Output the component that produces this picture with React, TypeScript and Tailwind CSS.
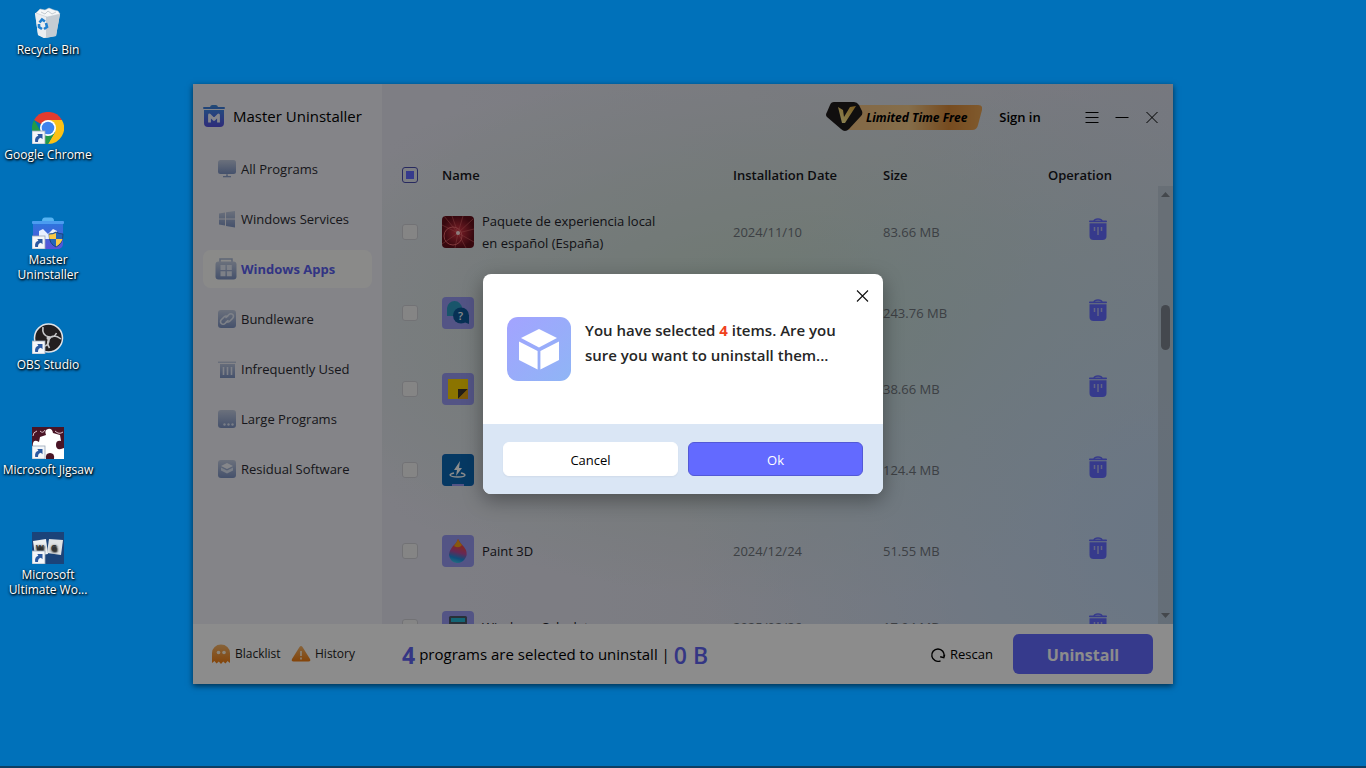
import React from 'react';

const Shortcut = () => (
    <g>
        <rect x="0" y="19" width="13" height="13" fill="#f4f6f9" stroke="#9aa7b8" strokeWidth="0.8" />
        <path d="M3.2 30c-.6-3.400 .6-5.800 3.200-6.300L5.300 22h5.200v5.300l-1.600-1.500c-2 .4-2.800 1.700-2.900 4.200z" fill="#2b58a0" />
    </g>
);

const RecycleBinIcon = () => (
    <svg viewBox="0 0 32 32" className="size-8">
        <path d="M3 6l14-2 11 3-4 22-12 2-6-3z" fill="#d5dbe0" />
        <path d="M3 6l11 3v21.500l-2 .5-6-3z" fill="#e9edf0" />
        <path d="M14 9l14-2-4 22-10 2z" fill="#c4ccd3" />
        <path d="M4 6l4-4 5 1 4-2 5 2 4 1 2 3-13 3z" fill="#f5f7f8" stroke="#bcc5cc" strokeWidth="0.5" />
        <path d="M9 5l4 2 3-3 4 3 4-2" stroke="#aeb8c0" strokeWidth="0.7" fill="none" />
        <path d="M7.500 15.500l2.500-3 3 2M14 16l1 4-3 2M10 22l-3-2v-3" stroke="#1f7fd0" strokeWidth="2.600" fill="none" />
    </svg>
);

const ChromeIcon = () => (
    <svg viewBox="0 0 32 32" className="size-8">
        <path d="M16 16L2.100 8A16 16 0 0 1 29.900 8z" fill="#e33b2e" />
        <path d="M16 8h13.900A16 16 0 0 1 16 32l7-12z" fill="#fbc116" />
        <path d="M2.100 8L9 20l7 4-1.500 8A16 16 0 0 1 2.100 8z" fill="#229a48" />
        <path d="M9 20l7 4 7-4-7 12A16 16 0 0 1 8 30z" fill="#229a48" />
        <circle cx="16" cy="16" r="8" fill="#fff" />
        <circle cx="16" cy="16" r="6.300" fill="#3f83ee" />
        <Shortcut />
    </svg>
);

const UninstallerIcon = () => (
    <svg viewBox="0 0 32 32" className="size-8">
        <defs>
            <linearGradient id="deskBin" x1="0" y1="0" x2="0" y2="1">
                <stop offset="0" stopColor="#2f74dd" />
                <stop offset="1" stopColor="#5a52d8" />
            </linearGradient>
        </defs>
        <path d="M10 4q0-3.500 3-3.500h6q3 0 3 3.500z" fill="#56b3f2" />
        <rect x="0" y="4" width="32" height="3" rx="1" fill="#4b9cf0" />
        <path d="M1 7h30v19q0 6-6 6H7q-6 0-6-6z" fill="url(#deskBin)" />
        <path d="M7 22v-8l4-2 5 5 5-5 4 2v8z" fill="#e8f0ff" />
        <path d="M24 15q3 2 7 2 0 10-7 13-7-3-7-13 4 0 7-2z" fill="#2464b8" stroke="#173c6e" strokeWidth="0.8" />
        <path d="M24 16v6h-6.500q-.5-2-.4-4.400 4 0 6.900-1.600zM24 22h6.500q-1.500 5-6.500 7.400z" fill="#fbc945" />
        <Shortcut />
    </svg>
);

const ObsIcon = () => (
    <svg viewBox="0 0 32 32" className="size-8">
        <circle cx="16.500" cy="16" r="14" fill="#231f20" stroke="#dfe3e8" strokeWidth="1.500" />
        <path d="M11 5c-1 6 1 9 6 10 3 .6 6-1 7.500-4M29 17c-5-4-9-4-12 0-2 3-1.500 6 .5 9M8 24c6 1 9-1 9-7" stroke="#c8c8ca" strokeWidth="1.600" fill="none" />
        <circle cx="16.500" cy="16" r="2" fill="#c8c8ca" />
        <Shortcut />
    </svg>
);

const JigsawIcon = () => (
    <svg viewBox="0 0 32 32" className="size-8">
        <rect width="32" height="32" fill="#4a1526" />
        <path d="M8 10l6-2q-2-5 2-6t5 4l7 2 1 6q-5-1-5 4t5 4l3-1v11H22q1-6-4-6t-4 6H3V21q-3-1-2-5t6-1z" fill="#fff" />
        <path d="M1 9q0-4 4-5M23 4q4 4 8 1M8 4q3 3 5-1" stroke="#d9c0c8" strokeWidth="1" fill="none" />
        <Shortcut />
    </svg>
);

const WordIcon = () => (
    <svg viewBox="0 0 32 32" className="size-8">
        <rect width="32" height="32" fill="#1b4379" />
        <path d="M1 9l13-2 2 15-13 2z" fill="#eef0f1" />
        <path d="M17 7l14 1-2 15-14-2z" fill="#dfe2e4" />
        <text x="4" y="19" fontSize="8" fontWeight="700" fill="#333" fontFamily="Open Sans, sans-serif">W</text>
        <text x="19" y="19" fontSize="8" fontWeight="700" fill="#333" fontFamily="Open Sans, sans-serif">G</text>
        <Shortcut />
    </svg>
);

const shortcuts = [
    { label: 'Recycle Bin', icon: <RecycleBinIcon /> },
    { label: 'Google Chrome', icon: <ChromeIcon /> },
    { label: 'Master Uninstaller', icon: <UninstallerIcon /> },
    { label: 'OBS Studio', icon: <ObsIcon /> },
    { label: 'Microsoft Jigsaw', icon: <JigsawIcon /> },
    { label: 'Microsoft Ultimate Wo...', icon: <WordIcon /> },
];

// shared gradient for the grey-blue sidebar glyphs
const NavGlyph = ({ children }: { children: React.ReactNode }) => (
    <svg viewBox="0 0 20 20" className="size-5 shrink-0" fill="url(#navFill)">
        {children}
    </svg>
);

const navItems = [
    {
        label: 'All Programs',
        icon: <NavGlyph><rect x="1" y="1" width="18" height="14" rx="2.500" /><path d="M9 15h2v2h3v1.200H6V17h3z" /></NavGlyph>,
    },
    {
        label: 'Windows Services',
        icon: <NavGlyph><path d="M2 4.500L8 3.500V9.500H2zM9 3.300L18 2V9.500H9zM2 10.500H8V16.500L2 15.500zM9 10.500H18V18.500L9 17z" /></NavGlyph>,
    },
    {
        label: 'Windows Apps',
        active: true,
        icon: (
            <svg viewBox="0 0 22 22" className="size-[22px] shrink-0">
                <path d="M5 4.500V1h12v3.500" fill="none" stroke="#a9b6d6" strokeWidth="1.500" />
                <rect x="0.500" y="3.500" width="21" height="18" rx="3" fill="url(#navFill)" />
                <path d="M5.500 7h5v5h-5zM11.800 7h5v5h-5zM5.500 13.300h5v5h-5zM11.800 13.300h5v5h-5z" fill="#e3e9f6" />
            </svg>
        ),
    },
    {
        label: 'Bundleware',
        icon: (
            <NavGlyph>
                <rect x="1" y="1" width="18" height="18" rx="3" />
                <g fill="none" stroke="#e6ecf8" strokeWidth="1.600" strokeLinecap="round">
                    <path d="M9 8.500l3-3a2.600 2.600 0 0 1 3.700 3.700l-3 3a2.600 2.600 0 0 1-3.200.4" />
                    <path d="M11 11.500l-3 3a2.600 2.600 0 0 1-3.700-3.700l3-3a2.600 2.600 0 0 1 3.200-.4" />
                </g>
            </NavGlyph>
        ),
    },
    {
        label: 'Infrequently Used',
        icon: (
            <NavGlyph>
                <path d="M1 2.500h18V4H1zM3 5h15v14H3z" />
                <path d="M6.500 8v8M10.500 8v8M14.500 8v8" stroke="#e6ecf8" strokeWidth="1.600" />
            </NavGlyph>
        ),
    },
    {
        label: 'Large Programs',
        icon: (
            <NavGlyph>
                <rect x="1" y="1" width="18" height="18" rx="3" />
                <g fill="#dbe4f5">
                    <circle cx="7.500" cy="15.500" r="1.200" />
                    <circle cx="11.500" cy="15.500" r="1.200" />
                    <circle cx="15.500" cy="15.500" r="1.200" />
                </g>
            </NavGlyph>
        ),
    },
    {
        label: 'Residual Software',
        icon: (
            <NavGlyph>
                <rect x="1" y="1" width="18" height="18" rx="3" />
                <path d="M10 4l6 3-6 3-6-3z" fill="#f2f5fc" />
                <path d="M4 8.500l6 3 6-3v3l-6 3-6-3z" fill="#dbe4f5" />
            </NavGlyph>
        ),
    },
];

const TrashIcon = () => (
    <svg viewBox="0 0 18 22" className="w-[18px] h-[22px]">
        <path d="M5 3Q5.500 1 9 1t4 2" fill="none" stroke="#636aff" strokeWidth="1.600" />
        <rect x="0" y="2.600" width="18" height="1.600" rx="0.800" fill="#636aff" />
        <path d="M0.500 5.300h17v12.700q0 4-4 4h-9q-4 0-4-4z" fill="#636aff" />
        <path d="M5.500 9v4M9 9v8M12.500 9v4" stroke="#b3b8ee" strokeWidth="1.500" />
    </svg>
);

const AppTile = ({ kind }: { kind: string }) => (
    <svg viewBox="0 0 32 32" className="size-8 shrink-0 rounded">
        {kind === 'lang' && (
            <>
                <rect width="32" height="32" fill="url(#burst)" />
                <g stroke="#e06a6a" strokeWidth="0.700" opacity="0.800">
                    <path d="M16 17L2 0M16 17L10 0M16 17L21 0M16 17L31 3M16 17L32 13M16 17L32 26M16 17L24 32M16 17L13 32M16 17L0 28M16 17L0 9" />
                </g>
                <circle cx="11" cy="20" r="9" fill="none" stroke="#e8666c" strokeWidth="1" />
                <circle cx="16" cy="17" r="2" fill="#ffe4e4" />
            </>
        )}
        {kind !== 'lang' && <rect width="32" height="32" fill="#9799f3" />}
        {kind === 'help' && (
            <>
                <path d="M5 19V11a7.500 7.500 0 1 1 8 8H9z" fill="#2f9cc4" />
                <circle cx="19" cy="18.500" r="8" fill="#0d5a9c" />
                <path d="M22 25l5 2v-9z" fill="#0d5a9c" />
                <text x="16" y="23" fontSize="11" fontWeight="600" fill="#fff" fontFamily="Open Sans, sans-serif">?</text>
            </>
        )}
        {kind === 'notes' && (
            <>
                <path d="M6 6h20v20H6z" fill="#fdd400" />
                <path d="M16 26V16h10z" fill="#40372a" />
                <path d="M16 26L26 16v10z" fill="#e0a112" />
            </>
        )}
        {kind === 'quick' && (
            <>
                <path d="M0 0h32v32H22v-2H10v2H0z" fill="#0c68b4" />
                <path d="M18 7l-6 9h3l-1 6 6-8h-3z" fill="#fff" />
                <path d="M12 19q-4 1-4 2 1 2 8 2t7-2q0-1-4-2" fill="none" stroke="#fff" strokeWidth="1.300" />
            </>
        )}
        {kind === 'paint' && (
            <>
                <path d="M16 4q2 4 6 8 4 5 2 10-3 6-9 6-7-1-8-8 0-4 4-9 4-3 5-7z" fill="url(#drop)" />
                <path d="M16 4q1 3 4 6-3 4-8 1 3-4 4-7z" fill="#f6a21b" />
            </>
        )}
        {kind === 'calc' && (
            <>
                <rect x="7" y="5" width="18" height="24" rx="1.500" fill="#4c5866" />
                <rect x="9" y="7" width="14" height="4" fill="#25b8d6" />
                <path d="M9 13h4v4H9zM14 13h4v4h-4zM19 13h4v4h-4z" fill="#c6ccd4" />
            </>
        )}
    </svg>
);

// names and dates are only filled in for the rows the dialog leaves uncovered
const rows = [
    { kind: 'lang', name: 'Paquete de experiencia local en español (España)', date: '2024/11/10', size: '83.66 MB', tall: true },
    { kind: 'help', name: '', date: '', size: '243.76 MB', tall: false },
    { kind: 'notes', name: '', date: '', size: '38.66 MB', tall: false },
    { kind: 'quick', name: '', date: '', size: '124.4 MB', tall: true },
    { kind: 'paint', name: 'Paint 3D', date: '2024/12/24', size: '51.55 MB', tall: false },
    { kind: 'calc', name: 'Windows Calculator', date: '2025/02/26', size: '17.94 MB', tall: false },
];

const Sidebar = () => (
    <aside className="w-[189px] shrink-0 bg-[#f1f1f7]">
        <div className="flex items-center gap-2 pl-[10px] pt-5 text-[15px] text-black">
            <svg viewBox="0 0 22 24" className="w-[22px] h-6">
                <path d="M7 4q0-3 2.500-3h3Q15 1 15 4z" fill="#3f86d8" />
                <rect x="0" y="3" width="22" height="2" rx="1" fill="#3c7ddb" />
                <path d="M1 6h20v13q0 4-4 4H5q-4 0-4-4z" fill="url(#logoFill)" />
                <path d="M6.500 18.500v-7.500l4.500 4.500 4.500-4.500v7.500" fill="none" stroke="#f3f5ff" strokeWidth="2.800" strokeLinejoin="round" />
            </svg>
            <span>Master Uninstaller</span>
        </div>
        <nav className="flex flex-col gap-3 px-[10px] pt-[22px]">
            {navItems.map(item => (
                <a
                    key={item.label}
                    href="#"
                    className={item.active
                        ? 'flex h-[38px] items-center gap-1 rounded-lg bg-[#fcfcfa] pl-3 text-[13px] font-bold text-[#5b5fef]'
                        : 'flex h-[38px] items-center gap-1 pl-[14px] text-[13px] text-[#2b2b33]'}
                >
                    {item.icon}
                    <span className="pt-0.5">{item.label}</span>
                </a>
            ))}
        </nav>
    </aside>
);

const TitleBar = () => (
    <header className="flex h-[77px] items-start justify-end pr-[14px] pt-4 text-black">
        <button className="relative mr-4 h-9 w-[156px] pl-10 text-left text-[12px] font-bold italic">
            <svg viewBox="0 0 156 36" className="absolute inset-0 h-9 w-[156px]">
                <path d="M22 5H152q5 0 4 5l-4 15q-1 5-6 5H22z" fill="url(#ribbon)" />
                <path d="M8 2H28q3 0 5 3l3 6q1 3-1 5L23 29q-4 4-8 0L1 17q-2-2 0-5l3-7q1-3 4-3z" fill="#1e1a1a" />
                <path d="M12 7l5 3 1 7 6-10 6-1-11 17h-3z" fill="url(#goldV)" />
            </svg>
            <span className="relative">Limited Time Free</span>
        </button>
        <button className="mr-[43px] h-9 w-11 text-[13px] font-semibold">Sign in</button>
        <div className="flex h-[34px] items-center gap-4">
            <button aria-label="Menu">
                <svg viewBox="0 0 14 14" className="size-[14px]"><path d="M0.500 2.500h13M0.500 7.500h13M0.500 12.500h13" stroke="#000" /></svg>
            </button>
            <button aria-label="Minimize">
                <svg viewBox="0 0 14 14" className="size-[14px]"><path d="M0.500 7.500h13" stroke="#000" /></svg>
            </button>
            <button aria-label="Close">
                <svg viewBox="0 0 14 14" className="size-[14px]"><path d="M1.500 2l11 11M12.500 2l-11 11" stroke="#000" /></svg>
            </button>
        </div>
    </header>
);

const ProgramTable = () => (
    <table className="w-full table-fixed text-left text-[13px] leading-[22px]">
        <colgroup>
            <col className="w-[60px]" />
            <col />
            <col className="w-[150px]" />
            <col className="w-[165px]" />
            <col className="w-[110px]" />
        </colgroup>
        <thead>
            <tr className="h-7 text-[#17171c]">
                <th className="pl-5">
                    <input
                        type="checkbox"
                        aria-label="Select all"
                        className="block size-4 appearance-none rounded-[3px] border border-[#4a4dae] p-[3px] before:block before:size-2 before:bg-[#636aff]"
                    />
                </th>
                <th className="font-semibold">Name</th>
                <th className="font-semibold">Installation Date</th>
                <th className="font-semibold">Size</th>
                <th className="font-semibold">Operation</th>
            </tr>
        </thead>
        <tbody>
            {rows.map(row => (
                <tr key={row.kind} className={row.tall ? 'h-[86px]' : 'h-[76px]'}>
                    <td className="pl-5">
                        <input
                            type="checkbox"
                            aria-label={`Select ${row.name}`}
                            className="block size-4 appearance-none rounded-[3px] border border-[#cfd0d6] bg-[#f3f3f3]"
                        />
                    </td>
                    <td className="pr-16">
                        <div className="flex items-center gap-2 text-[#22222a]">
                            <AppTile kind={row.kind} />
                            <span>{row.name}</span>
                        </div>
                    </td>
                    <td className="text-[#6f757c]">{row.date}</td>
                    <td className="text-[#6f757c]">{row.size}</td>
                    <td className="pb-1.5 pl-[41px]">
                        <button className="block" aria-label="Uninstall program"><TrashIcon /></button>
                    </td>
                </tr>
            ))}
        </tbody>
    </table>
);

const ScrollBar = () => (
    <div className="mt-[25px] flex w-[15px] flex-col items-center justify-between bg-[#b3bfcd]/60 py-[6px]">
        <svg viewBox="0 0 9 5" className="w-[9px] h-[5px]"><path d="M0 5l4.500-5L9 5z" fill="#7c838c" /></svg>
        <div className="mb-[156px] h-[45px] w-[9px] rounded-full bg-[#7d838e]" />
        <svg viewBox="0 0 9 5" className="w-[9px] h-[5px]"><path d="M0 0h9L4.500 5z" fill="#7c838c" /></svg>
    </div>
);

const Footer = () => (
    <footer className="flex h-[60px] items-center bg-white pl-[18px] pr-5 text-black">
        <a href="#" className="flex w-20 items-center gap-1 text-[12px] text-[#222]">
            <svg viewBox="0 0 20 20" className="size-5">
                <path d="M1 19V9a9 8.500 0 0 1 18 0v10l-2.500-2-2 2.500-2.300-2-2.200 2.500-2.200-2.500L5.500 19.500l-2-2.500z" fill="url(#amber)" />
                <circle cx="7.500" cy="8.500" r="1.800" fill="#fff4e0" />
                <circle cx="13" cy="8.500" r="1.800" fill="#fff4e0" />
            </svg>
            Blacklist
        </a>
        <a href="#" className="flex w-[111px] items-center gap-1 text-[12px] text-[#222]">
            <svg viewBox="0 0 20 20" className="size-5">
                <path d="M8.500 3q1.500-2 3 0l7.500 12q1 2.500-1.500 2.500h-15Q0 17.500 1 15z" fill="url(#amber)" />
                <path d="M10 7v5M10 13.500v2" stroke="#fff4e0" strokeWidth="1.600" />
            </svg>
            History
        </a>
        <p className="flex flex-1 items-center gap-1 text-[15px]">
            <span className="pt-0.5 text-[23px] font-bold text-[#5f63f0]">4</span>
            programs are selected to uninstall |
            <span className="pt-0.5 text-[23px] font-semibold text-[#5f63f0]">0 B</span>
        </p>
        <button className="mr-5 flex items-center gap-1 pt-0.5 text-[13px]">
            <svg viewBox="0 0 16 16" className="size-4" fill="none" stroke="#000" strokeWidth="1.400">
                <path d="M10.500 13.800A6.200 6.200 0 1 1 14 9.500" />
                <path d="M10.200 9.800l3.600 .8 .9-3" />
            </svg>
            Rescan
        </button>
        <button className="h-10 w-[140px] rounded-md bg-[#636aff] pt-0.5 text-[16px] font-bold text-white">Uninstall</button>
    </footer>
);

const ConfirmDialog = () => (
    <div role="dialog" aria-label="Confirm uninstall" className="w-[400px] overflow-hidden rounded-lg bg-white shadow-[0_6px_20px_rgba(0,0,0,0.35)]">
        <div className="flex h-[150px] items-start pl-6 pr-[14px]">
            <svg viewBox="0 0 64 64" className="mt-[43px] size-16 shrink-0">
                <rect width="64" height="64" rx="11" fill="url(#boxFill)" />
                <path d="M32 12l18 9-18 9.500L14 21z" fill="#fff" />
                <path d="M12 24.500L30.600 34v18.500L12 43zM52 24.500L33.400 34v18.500L52 43z" fill="#fff" />
            </svg>
            <p className="mt-[44px] flex-1 pl-[14px] text-[15px] font-semibold leading-[25px] text-[#262626]">
                You have selected <span className="font-bold text-[#f0411c]">4</span> items. Are you sure you want to uninstall them...
            </p>
            <button aria-label="Close dialog" className="mt-[15px]">
                <svg viewBox="0 0 14 14" className="size-[14px]"><path d="M2 1.500l11 11M13 1.500l-11 11" stroke="#111" strokeWidth="1.100" /></svg>
            </button>
        </div>
        <div className="flex h-[70px] items-center gap-[10px] bg-[#dae6f5] px-5 text-[13px]">
            <button className="h-[34px] flex-1 rounded-md border border-white bg-white pt-[3px] text-black shadow-xs">Cancel</button>
            <button className="h-[34px] flex-1 rounded-md border border-[#5359d6] bg-[#636aff] pt-[3px] text-white">Ok</button>
        </div>
    </div>
);

const Gradients = () => (
    <svg className="absolute size-0" aria-hidden="true">
        <defs>
            <linearGradient id="navFill" x1="0" y1="0" x2="0" y2="1">
                <stop offset="0" stopColor="#c3cde2" />
                <stop offset="1" stopColor="#7d93c4" />
            </linearGradient>
            <linearGradient id="logoFill" x1="0" y1="0" x2="0" y2="1">
                <stop offset="0" stopColor="#4285e6" />
                <stop offset="1" stopColor="#5550e0" />
            </linearGradient>
            <linearGradient id="ribbon" x1="0" y1="0" x2="1" y2="0">
                <stop offset="0" stopColor="#f0bf80" />
                <stop offset="0.450" stopColor="#f2c888" />
                <stop offset="0.750" stopColor="#d88a3a" />
                <stop offset="1" stopColor="#e8a352" />
            </linearGradient>
            <linearGradient id="goldV" x1="0" y1="1" x2="1" y2="0">
                <stop offset="0" stopColor="#fff3a0" />
                <stop offset="1" stopColor="#e0a83a" />
            </linearGradient>
            <linearGradient id="amber" x1="0" y1="0" x2="0" y2="1">
                <stop offset="0" stopColor="#f5b56a" />
                <stop offset="1" stopColor="#f07c10" />
            </linearGradient>
            <linearGradient id="boxFill" x1="0" y1="0" x2="1" y2="1">
                <stop offset="0" stopColor="#a3a3ff" />
                <stop offset="1" stopColor="#8fb5f5" />
            </linearGradient>
            <linearGradient id="drop" x1="0.600" y1="0" x2="0.400" y2="1">
                <stop offset="0.300" stopColor="#e8484c" />
                <stop offset="0.550" stopColor="#b84a9c" />
                <stop offset="0.800" stopColor="#1c8fe0" />
                <stop offset="1" stopColor="#3fc4e8" />
            </linearGradient>
            <radialGradient id="burst">
                <stop offset="0" stopColor="#e03848" />
                <stop offset="1" stopColor="#64101c" />
            </radialGradient>
        </defs>
    </svg>
);

export default function App() {
    return (
        <div className="grid min-h-screen grid-cols-[1fr_minmax(0,980px)_1fr] border-b-2 border-[#0d3f63] bg-[#0071ba] pt-0.5 font-['Open_Sans',sans-serif]">
            <Gradients />
            <ul className="w-24 pt-[5px] text-center text-[12px] leading-[15px] text-white">
                {shortcuts.map(item => (
                    <li key={item.label} className="h-[105px]">
                        <a href="#" className="flex flex-col items-center gap-[3px] text-shadow-[1px_1px_2px_#000,0_1px_3px_#000]">
                            {item.icon}
                            <span>{item.label}</span>
                        </a>
                    </li>
                ))}
            </ul>

            <main className="relative self-center shadow-[0_2px_6px_rgba(0,0,0,0.6)]">
                <div className="flex bg-[radial-gradient(circle_at_100%_85%,#c0d8f2_0%,transparent_45%),radial-gradient(ellipse_at_62%_45%,#c6dccd_0%,transparent_65%),linear-gradient(90deg,#e6e6f1_20%,#d9dbe6)]">
                    <Sidebar />
                    <section className="min-w-0 flex-1">
                        <TitleBar />
                        <div className="flex h-[463px] overflow-hidden">
                            <div className="min-w-0 flex-1">
                                <ProgramTable />
                            </div>
                            <ScrollBar />
                        </div>
                    </section>
                </div>
                <Footer />
                <div className="absolute inset-0 flex items-center justify-center bg-black/45">
                    <ConfirmDialog />
                </div>
            </main>
        </div>
    );
}
